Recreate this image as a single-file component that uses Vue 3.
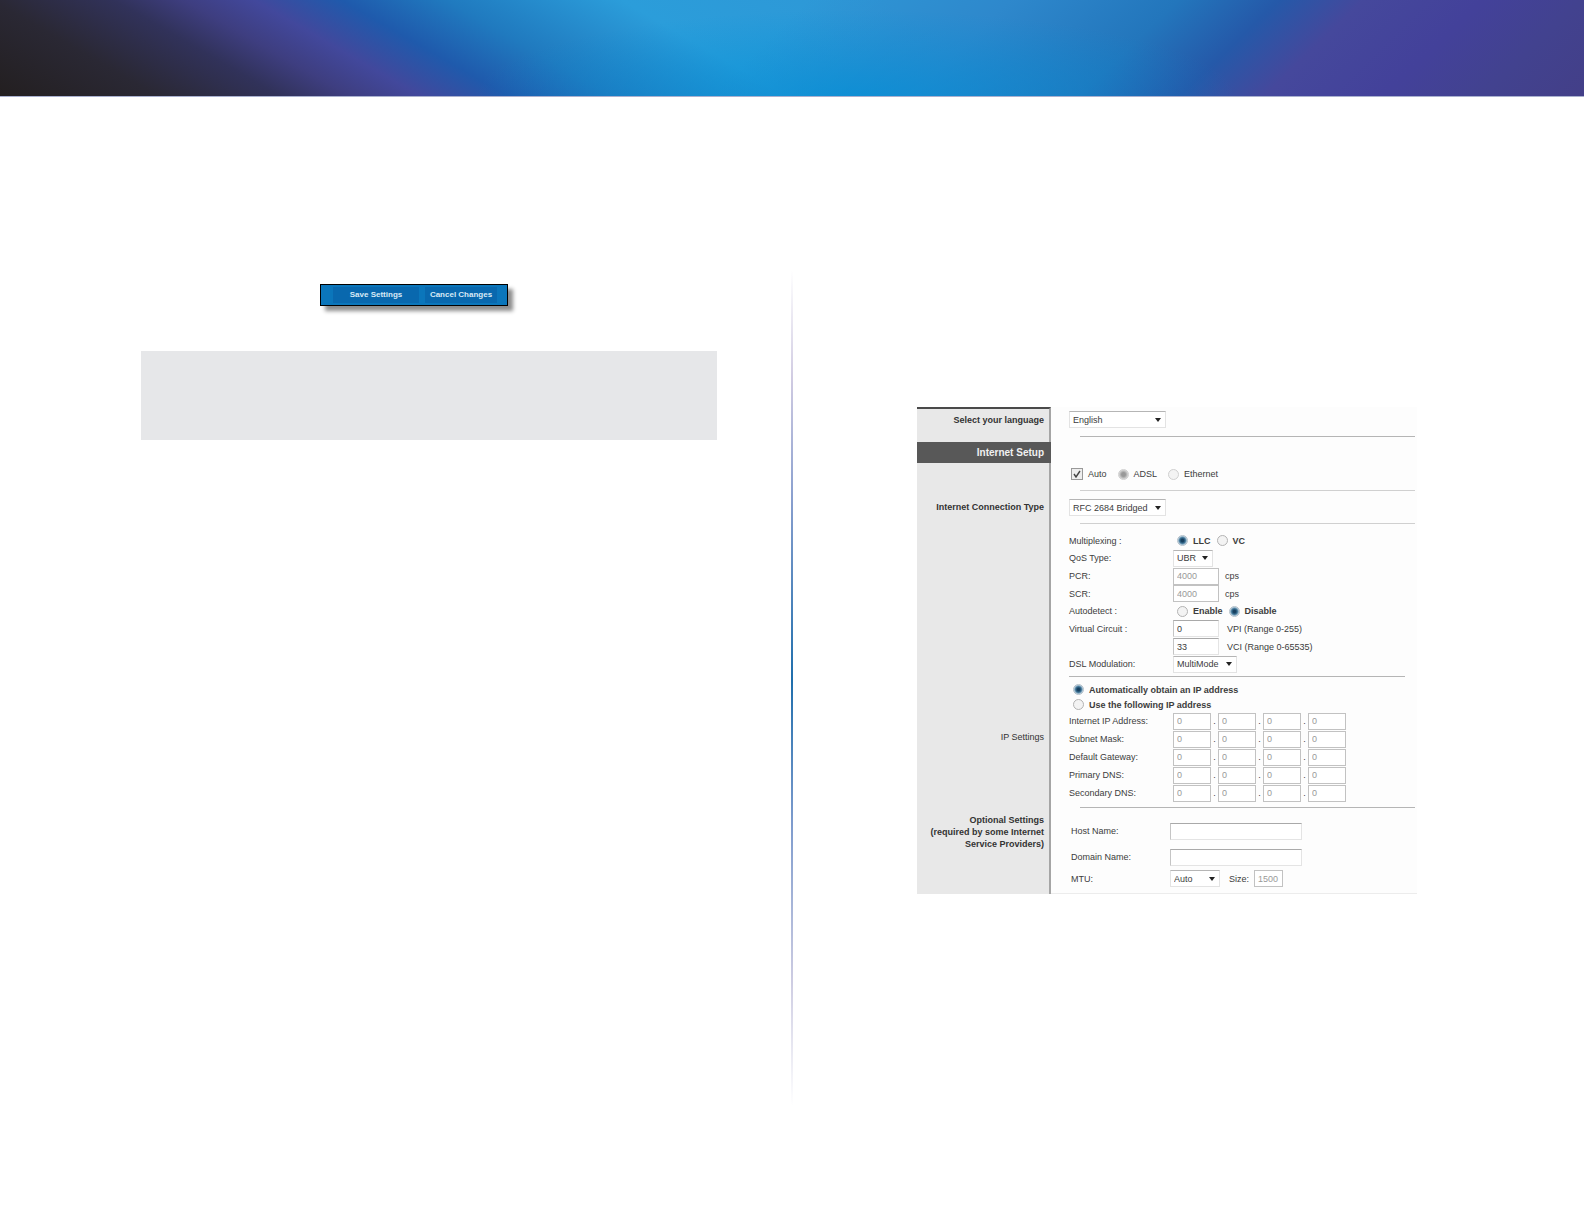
<script setup>
import { reactive } from 'vue'

const octetRows = [
  'Internet IP Address:',
  'Subnet Mask:',
  'Default Gateway:',
  'Primary DNS:',
  'Secondary DNS:',
]

const form = reactive({
  language: 'English',
  auto: true,
  line: 'adsl',
  connection: 'RFC 2684 Bridged',
  mux: 'llc',
  qos: 'UBR',
  pcr: '4000',
  scr: '4000',
  autodetect: 'disable',
  vpi: '0',
  vci: '33',
  modulation: 'MultiMode',
  ipMode: 'auto',
  octets: octetRows.map(() => ['0', '0', '0', '0']),
  host: '',
  domain: '',
  mtu: 'Auto',
  size: '1500',
})
</script>

<template>
  <div class="page">
    <header class="banner"></header>

    <main class="columns">
      <section class="left">
        <div class="actions">
          <button type="button" class="save">Save Settings</button>
          <button type="button" class="cancel">Cancel Changes</button>
        </div>
        <aside class="note"></aside>
      </section>

      <div class="divider"></div>

      <section class="right">
        <form class="panel" @submit.prevent>
          <div class="section">
            <div class="side language-side"><label for="language">Select your language</label></div>
            <div class="body">
              <div class="line language-line">
                <select id="language" v-model="form.language" class="wide">
                  <option>English</option>
                </select>
              </div>
              <hr>
            </div>
          </div>

          <div class="section">
            <div class="side"><h2>Internet Setup</h2></div>
            <div class="body">
              <div class="line mode-line">
                <label><input v-model="form.auto" type="checkbox">Auto</label>
                <label><input v-model="form.line" type="radio" name="line" value="adsl" disabled>ADSL</label>
                <label><input v-model="form.line" type="radio" name="line" value="ethernet" disabled>Ethernet</label>
              </div>
              <hr class="faint">
            </div>
          </div>

          <div class="section">
            <div class="side connection-side"><label for="connection">Internet Connection Type</label></div>
            <div class="body">
              <div class="line connection-line">
                <select id="connection" v-model="form.connection" class="wide">
                  <option>RFC 2684 Bridged</option>
                </select>
              </div>
              <hr class="faint">
            </div>
          </div>

          <div class="section">
            <div class="side"></div>
            <div class="body">
              <div class="dsl">
                <div class="field">
                  <span class="name">Multiplexing :</span>
                  <div class="choices">
                    <label><input v-model="form.mux" type="radio" name="mux" value="llc">LLC</label>
                    <label><input v-model="form.mux" type="radio" name="mux" value="vc">VC</label>
                  </div>
                </div>
                <div class="field">
                  <label class="name" for="qos">QoS Type:</label>
                  <select id="qos" v-model="form.qos" class="short"><option>UBR</option></select>
                </div>
                <div class="field">
                  <label class="name" for="pcr">PCR:</label>
                  <input id="pcr" v-model="form.pcr" type="text" class="number" disabled>
                  <span class="unit">cps</span>
                </div>
                <div class="field">
                  <label class="name" for="scr">SCR:</label>
                  <input id="scr" v-model="form.scr" type="text" class="number" disabled>
                  <span class="unit">cps</span>
                </div>
                <div class="field">
                  <span class="name">Autodetect :</span>
                  <div class="choices">
                    <label><input v-model="form.autodetect" type="radio" name="autodetect" value="enable">Enable</label>
                    <label><input v-model="form.autodetect" type="radio" name="autodetect" value="disable">Disable</label>
                  </div>
                </div>
                <div class="field">
                  <span class="name">Virtual Circuit :</span>
                  <input id="vpi" v-model="form.vpi" type="text" class="number">
                  <label class="range" for="vpi">VPI (Range 0-255)</label>
                </div>
                <div class="field">
                  <span class="name"></span>
                  <input id="vci" v-model="form.vci" type="text" class="number">
                  <label class="range" for="vci">VCI (Range 0-65535)</label>
                </div>
                <div class="field">
                  <label class="name" for="modulation">DSL Modulation:</label>
                  <select id="modulation" v-model="form.modulation" class="medium"><option>MultiMode</option></select>
                </div>
              </div>
              <hr class="outdent">
            </div>
          </div>

          <div class="section">
            <div class="side ip-side">IP Settings</div>
            <div class="body">
              <div class="ip">
                <label class="ip-mode"><input v-model="form.ipMode" type="radio" name="ip" value="auto">Automatically obtain an IP address</label>
                <label class="ip-mode"><input v-model="form.ipMode" type="radio" name="ip" value="manual">Use the following IP address</label>
                <div v-for="(name, r) in octetRows" :key="name" class="field octet-row">
                  <label class="name" :for="`octet-${r}-0`">{{ name }}</label>
                  <template v-for="(_, i) in form.octets[r]" :key="i">
                    <span v-if="i" class="dot">.</span>
                    <input
                      :id="`octet-${r}-${i}`"
                      v-model="form.octets[r][i]"
                      type="text"
                      class="octet"
                      :aria-label="`${name} ${i + 1}`"
                      disabled
                    >
                  </template>
                </div>
              </div>
              <hr>
            </div>
          </div>

          <div class="section">
            <div class="side optional-side">Optional Settings<br>(required by some Internet<br>Service Providers)</div>
            <div class="body optional">
              <div class="field host">
                <label class="name" for="host">Host Name:</label>
                <input id="host" v-model="form.host" type="text" class="long">
              </div>
              <div class="field host">
                <label class="name" for="domain">Domain Name:</label>
                <input id="domain" v-model="form.domain" type="text" class="long">
              </div>
              <div class="field">
                <label class="name" for="mtu">MTU:</label>
                <select id="mtu" v-model="form.mtu" class="mtu"><option>Auto</option></select>
                <label class="size-name" for="size">Size:</label>
                <input id="size" v-model="form.size" type="text" class="size" disabled>
              </div>
            </div>
          </div>
        </form>
      </section>
    </main>
  </div>
</template>

<style>
body {
  margin: 0;
  background: #fff;
}
</style>

<style scoped>
.page {
  font-family: "Liberation Sans", Arial, sans-serif;
  font-size: 9px;
  line-height: 12px;
  color: #3c3c3c;
}

.banner {
  height: 96px;
  border-bottom: 1px solid #a9b0cf;
  background:
    radial-gradient(ellipse 24% 90% at 54% 100%, #008fd6aa, transparent),
    linear-gradient(136deg, transparent 48%, #2e88cc 60%, #2376bc 70%, #2559a9 76%, #45489c 81%, #43419a 88%, #42428f 94%, #433f88 100%),
    linear-gradient(30deg, #231f20 0%, #2a2834 9%, #31325a 16%, #3e3e80 20%, #42489c 24%, #1f5aac 29%, #207abf 35%, #2b9dda 45%, #2e97d6 60%, #2e97d6 100%);
}

.columns {
  display: grid;
  grid-template-columns: 1fr 2px 1fr;
  padding: 173px 0 118px;
}

.divider {
  min-height: 836px;
  background: linear-gradient(#fff 0%, #d0cbe2 13%, #8ba0cf 27%, #1f6eac 49%, #7d9bcd 66%, #cdcce2 85%, #fff 100%);
}

/* left column */
.left {
  padding: 14px 74px 0 141px;
}

.actions {
  display: flex;
  justify-content: space-between;
  width: 188px;
  box-sizing: border-box;
  margin-left: 179px;
  padding: 2px 10px 2px 12px;
  border: 1px solid #000;
  background: #0b76bb;
  box-shadow: 5px 5px 4px #8d8d8d;
}

.actions button {
  height: 16px;
  padding: 0;
  border: 0;
  background: #0968ae;
  color: #d9eaf6;
  font: bold 8px/16px "Liberation Sans", Arial, sans-serif;
}

.save {
  width: 86px;
}

.cancel {
  width: 72px;
}

.note {
  height: 89px;
  margin-top: 45px;
  background: #e6e7e9;
}

/* settings panel */
.right {
  padding: 137px 167px 0 124px;
}

.panel {
  background: #fdfdfd;
}

.section {
  display: grid;
  grid-template-columns: 134px 1fr;
}

.side {
  box-sizing: border-box;
  border-right: 2px solid #a5a5a5;
  padding-right: 5px;
  background: #e8e8e8;
  color: #333;
  font-weight: bold;
  text-align: right;
}

.side h2 {
  margin: 5px -7px 0 0;
  padding-right: 7px;
  background: #585858;
  color: #f0f0f0;
  font-size: 10px;
  line-height: 21px;
}

.language-side {
  padding-top: 5px;
  border-top: 2px solid #4a4a4a;
}

.connection-side {
  padding-top: 10px;
}

.ip-side {
  padding-top: 54px;
  font-weight: normal;
}

.optional-side {
  padding-top: 6px;
}

.body {
  padding-left: 18px;
}

hr {
  height: 1px;
  margin: 0 2px 0 11px;
  border: 0;
  background: #b5b5b5;
}

hr.faint {
  background: #d0d0d0;
}

hr.outdent {
  margin: 3px 12px 0 0;
}

.line {
  display: flex;
  align-items: center;
}

.language-line {
  padding: 4px 0 8px;
}

.mode-line {
  gap: 11px;
  padding: 29px 0 8px 2px;
  height: 16px;
}

.connection-line {
  padding: 8px 0 7px;
}

label {
  white-space: nowrap;
}

.mode-line label,
.choices label,
.ip-mode {
  display: flex;
  align-items: center;
  gap: 5px;
}

input,
select {
  box-sizing: border-box;
  margin: 0;
  border: 1px solid #e3e3e3;
  border-radius: 0;
  background: #fff;
  color: #3c3c3c;
  font: inherit;
}

select {
  height: 17px;
  padding: 0 3px;
  border-top-color: #b5b5b5;
  appearance: none;
  background: #fff url("data:image/svg+xml,%3Csvg xmlns='http://www.w3.org/2000/svg' width='6' height='4'%3E%3Cpath d='M0 0h6L3 4z' fill='%23222'/%3E%3C/svg%3E") no-repeat right 4px center;
}

input[type="text"] {
  height: 17px;
  padding: 0 3px;
  border-color: #a9a9a9 #e4e4e4 #e4e4e4 #c5c5c5;
}

input[type="text"]:disabled {
  border-color: #c2c2c2;
  background: #fff;
  color: #999;
}

input[type="radio"] {
  width: 11px;
  height: 11px;
  border: 1px solid #b3b3b3;
  border-radius: 50%;
  appearance: none;
  background: #f3f3f3;
}

input[type="radio"]:checked {
  border-color: #b3c0ca;
  background: radial-gradient(circle, #163f5f 0 20%, #3d7396 45%, #d3e2ec 75%);
}

input[type="radio"]:disabled {
  border-color: #d0d0d0;
}

input[type="radio"]:disabled:checked {
  background: radial-gradient(circle, #999 0 30%, #ddd 75%);
}

input[type="checkbox"] {
  width: 12px;
  height: 12px;
  border: 1px solid #999;
  appearance: none;
  background: #eee url("data:image/svg+xml,%3Csvg xmlns='http://www.w3.org/2000/svg' width='8' height='8'%3E%3Cpath d='M1 4l2 3 4-6' fill='none' stroke='%23444' stroke-width='1.4'/%3E%3C/svg%3E") no-repeat center;
}

.wide {
  width: 97px;
}

.short {
  width: 40px;
}

.medium {
  width: 64px;
}

.field {
  display: flex;
  align-items: center;
}

.name {
  flex: none;
  width: 104px;
}

.dsl {
  display: grid;
  grid-auto-rows: 1fr;
  height: 141px;
  padding-top: 8px;
}

.choices {
  display: flex;
  gap: 6px;
  padding-left: 4px;
  font-weight: bold;
}

.number {
  width: 46px;
}

.unit {
  padding-left: 6px;
}

.range {
  padding-left: 8px;
}

.ip {
  padding: 5px 0;
}

.ip-mode {
  height: 15px;
  padding-left: 4px;
  font-weight: bold;
}

.octet-row {
  height: 18px;
}

.octet {
  width: 38px;
}

.dot {
  width: 7px;
  text-align: center;
}

.optional {
  padding-top: 10px;
  padding-bottom: 6px;
  border-bottom: 1px solid #ececec;
}

.optional .name {
  width: 99px;
  padding-left: 2px;
}

.host {
  height: 26px;
}

.long {
  width: 132px;
}

.mtu {
  width: 50px;
}

.size-name {
  padding: 0 5px 0 9px;
}

.size {
  width: 29px;
}
</style>
